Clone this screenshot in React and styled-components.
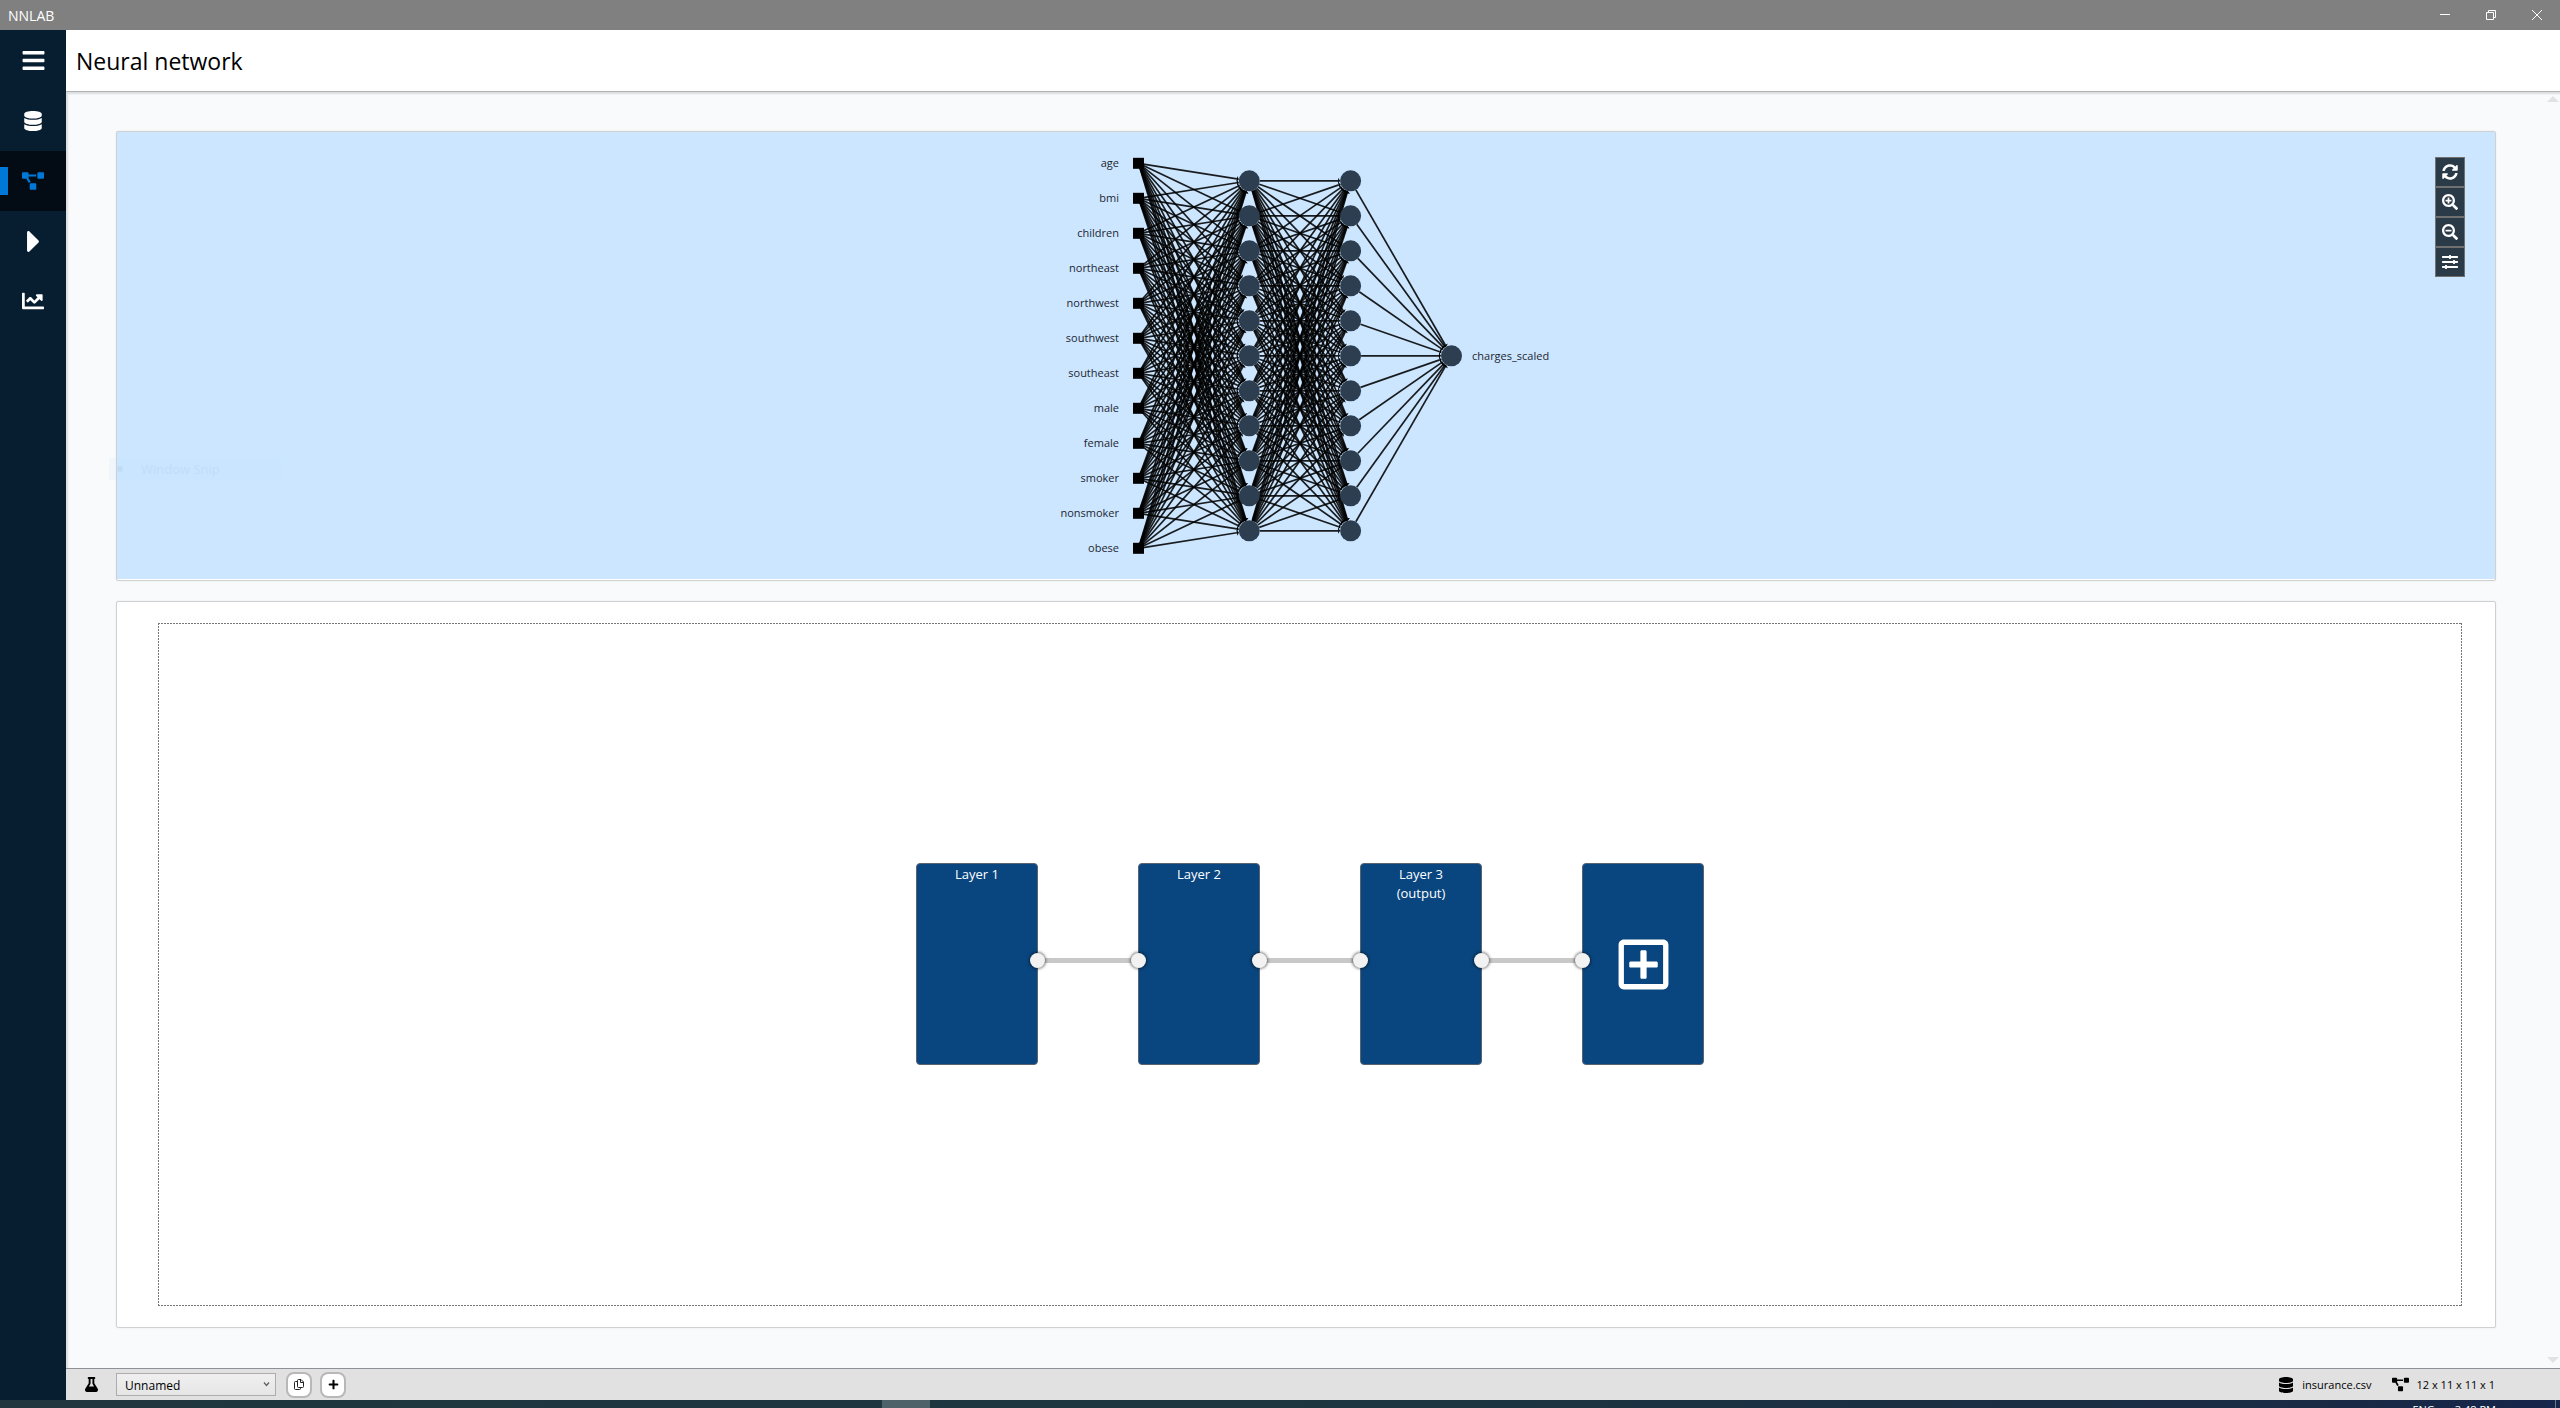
import React from "react";
import styled, { createGlobalStyle } from "styled-components";
import {
  FaBars,
  FaChartLine,
  FaDatabase,
  FaFlask,
  FaPlus,
  FaProjectDiagram,
  FaRegPlusSquare,
  FaSearchMinus,
  FaSearchPlus,
  FaSlidersH,
  FaSyncAlt,
} from "react-icons/fa";

const GlobalStyle = createGlobalStyle`
  * { box-sizing: border-box; }
  body {
    margin: 0;
    font-family: "Open Sans", "Noto Sans", "Liberation Sans", sans-serif;
    font-size: 13px;
    color: #000;
  }
  button { font: inherit; padding: 0; border: 0; background: none; color: inherit; }
`;

const Page = styled.div`
  display: flex;
  flex-direction: column;
  height: 100vh;
  overflow: hidden;
`;

const TitleBar = styled.header`
  display: flex;
  align-items: center;
  justify-content: space-between;
  height: 30px;
  padding-left: 8px;
  background: #808080;
  color: #fff;
  font-size: 14px;
`;

const WindowButtons = styled.div`
  display: flex;
`;

const WindowButton = styled.button`
  display: grid;
  place-items: center;
  width: 46px;
  height: 30px;
`;

const Body = styled.div`
  flex: 1;
  display: flex;
  min-height: 0;
`;

const Sidebar = styled.nav`
  display: flex;
  flex-direction: column;
  flex: none;
  width: 66px;
  background: #071d30;
  color: #fff;
`;

const SideButton = styled.button`
  display: flex;
  align-items: center;
  justify-content: center;
  height: 60px;
  color: ${(p) => (p.$active ? "#0078d7" : "#fff")};
  background: ${(p) =>
    p.$active
      ? "linear-gradient(#0078d7, #0078d7) 0 center / 8px 28px no-repeat, #030c14"
      : "transparent"};
  &:first-child { height: 61px; }
`;

const Main = styled.main`
  flex: 1;
  display: flex;
  flex-direction: column;
  min-width: 0;
`;

const Heading = styled.div`
  display: flex;
  align-items: center;
  height: 62px;
  padding-left: 10px;
  background: #fff;
  border-bottom: 1px solid #b1b4b7;
  h1 { margin: 0; font-size: 23px; line-height: 32px; font-weight: 400; }
`;

const Content = styled.div`
  position: relative;
  flex: 1;
  display: flex;
  flex-direction: column;
  gap: 20px;
  padding: 39px 64px 40px 50px;
  background: #f8fafc;
  box-shadow: inset 2px 2px 2px rgba(0, 0, 0, 0.12);
`;

const ScrollArrow = styled.span`
  position: absolute;
  right: 1px;
  ${(p) => (p.$down ? "bottom: 5px" : "top: 4px")};
  border: 6px solid transparent;
  border-width: ${(p) => (p.$down ? "6px 6px 0" : "0 6px 6px")};
  border-${(p) => (p.$down ? "top" : "bottom")}-color: #e1e2e3;
`;

const Panel = styled.section`
  position: relative;
  display: flex;
  background: #fff;
  border: 1px solid #cfd0d1;
  border-radius: 2px;
  box-shadow: 0 0 2px rgba(0, 0, 0, 0.08);
`;

const GraphPanel = styled(Panel)`
  height: 450px;
  padding-bottom: 1px;
`;

const GraphCanvas = styled.div`
  flex: 1;
  display: flex;
  justify-content: center;
  background: #cce6ff;
`;

const GraphTools = styled.div`
  position: absolute;
  top: 25px;
  right: 30px;
  width: 30px;
  display: flex;
  flex-direction: column;
`;

const GraphTool = styled.button`
  display: grid;
  place-items: center;
  height: 30px;
  border: 1px solid #707070;
  background: #2b3a47;
  color: #fff;
  font-size: 16px;
`;

const SnipHint = styled.div`
  position: absolute;
  left: -8px;
  top: 326px;
  display: flex;
  align-items: center;
  width: 172px;
  height: 22px;
  background: rgba(190, 225, 255, 0.12);
  color: #c1ddf6;
  &::before {
    content: "";
    width: 6px;
    height: 6px;
    margin: 0 18px 0 8px;
    border-radius: 50%;
    background: #c0dcf5;
  }
`;

const LayerPanel = styled(Panel)`
  flex: 1;
  padding: 21px 33px 21px 41px;
`;

const DASH = "#777 0 2px, transparent 2px 3px";

const LayerCanvas = styled.div`
  flex: 1;
  display: flex;
  align-items: center;
  justify-content: center;
  padding: 1px 1px 2px;
  background:
    repeating-linear-gradient(90deg, ${DASH}) top / 100% 1px no-repeat,
    repeating-linear-gradient(90deg, ${DASH}) bottom / 100% 1px no-repeat,
    repeating-linear-gradient(${DASH}) left / 1px 100% no-repeat,
    repeating-linear-gradient(${DASH}) right / 1px 100% no-repeat;
`;

const LayerCard = styled.button`
  display: flex;
  flex-direction: column;
  align-items: center;
  justify-content: ${(p) => (p.$centered ? "center" : "flex-start")};
  width: 122px;
  height: 202px;
  padding-top: ${(p) => (p.$centered ? 0 : 1)}px;
  border: 1px solid #5a6470;
  border-radius: 4px;
  background: #09467f;
  color: #fff;
  font-size: 13px;
  line-height: 19px;
`;

const Link = styled.div`
  position: relative;
  width: 100px;
  height: 5px;
  margin-bottom: 7px;
  background: #c8c8c8;
  &::before, &::after {
    content: "";
    position: absolute;
    top: -5px;
    width: 15px;
    height: 15px;
    border-radius: 50%;
    background: #f2f2f2;
    box-shadow: 0 0 3px 1px rgba(0, 0, 0, 0.5);
  }
  &::before { left: -8px; }
  &::after { right: -8px; }
`;

const StatusBar = styled.footer`
  display: flex;
  align-items: center;
  height: 32px;
  padding: 0 65px 0 18px;
  background: #e1e1e1;
  border-top: 1px solid #8d9196;
  font-size: 12px;
`;

const FlaskLabel = styled.label`
  display: grid;
  place-items: center;
  width: 14px;
  margin-right: 18px;
  font-size: 15px;
`;

const SelectBox = styled.div`
  display: grid;
  align-items: center;
  width: 160px;
  margin-right: 10px;
  svg { grid-area: 1 / 1; justify-self: end; margin-right: 6px; pointer-events: none; }
`;

const Select = styled.select`
  grid-area: 1 / 1;
  appearance: none;
  height: 23px;
  padding: 1px 8px 0;
  border: 1px solid #acacac;
  border-radius: 0;
  background: linear-gradient(#f0f0f0, #e5e5e5);
  color: #000;
  font: inherit;
`;

const RoundButton = styled.button`
  display: grid;
  place-items: center;
  width: 26px;
  height: 26px;
  margin-right: 8px;
  border: 2px solid #b8b8b8;
  border-radius: 8px;
  background: #fff;
`;

const StatusInfo = styled.div`
  display: flex;
  align-items: center;
  gap: 8px;
  font-size: 11px;
  margin-left: ${(p) => (p.$first ? "auto" : "20px")};
`;

const Taskbar = styled.div`
  display: flex;
  justify-content: flex-end;
  height: 8px;
  overflow: hidden;
  padding-right: 4px;
  background:
    linear-gradient(#4d6269, #4d6269) 882px 0 / 48px 8px no-repeat,
    linear-gradient(90deg, #21363f 0%, #1d3640 50%, #1a2a44 90%, #16254a 100%);
  color: #fff;
  font-size: 11px;
  line-height: 19px;
  gap: 20px;
`;

const Clock = styled.span`
  padding-right: 59px;
  border-right: 1px solid #6d7787;
`;

const INPUTS = [
  "age", "bmi", "children", "northeast", "northwest", "southwest",
  "southeast", "male", "female", "smoker", "nonsmoker", "obese",
];

const STEP = 35;
const column = (x, y, count) =>
  Array.from({ length: count }, (_, i) => ({ x, y: y + i * STEP }));

const inputNodes = column(80.5, 31.3, 12);
const hiddenA = column(191.3, 48.8, 11);
const hiddenB = column(292.6, 48.8, 11);
const outputNodes = column(393.5, 223.8, 1);
const RADIUS = 10.5;

function Edge({ from, to, square }) {
  const dx = to.x - from.x;
  const dy = to.y - from.y;
  const len = Math.hypot(dx, dy);
  const ux = dx / len;
  const uy = dy / len;
  const start = square ? 0 : RADIUS;
  const tipX = to.x - ux * RADIUS;
  const tipY = to.y - uy * RADIUS;
  const baseX = tipX - ux * 2;
  const baseY = tipY - uy * 2;
  return (
    <>
      <line
        x1={from.x + ux * start}
        y1={from.y + uy * start}
        x2={baseX}
        y2={baseY}
        stroke="#000"
        strokeOpacity="0.88"
        strokeWidth="1.7"
      />
      <polygon
        points={`${tipX},${tipY} ${baseX - uy * 3},${baseY + ux * 3} ${baseX + uy * 3},${baseY - ux * 3}`}
      />
    </>
  );
}

function Edges({ from, to, square }) {
  return from.flatMap((a, i) =>
    to.map((b, j) => <Edge key={`${i}-${j}`} from={a} to={b} square={square} />)
  );
}

function NetworkGraph() {
  return (
    <svg width="496" height="448" viewBox="0 0 496 448" fontSize="11" fill="#000">
      <Edges from={inputNodes} to={hiddenA} square />
      <Edges from={hiddenA} to={hiddenB} />
      <Edges from={hiddenB} to={outputNodes} />
      {inputNodes.map((n, i) => (
        <g key={INPUTS[i]}>
          <rect x={n.x - 5.5} y={n.y - 5.5} width="11" height="11" />
          <text x="61" y={n.y + 4} textAnchor="end" fill="#1c2732">{INPUTS[i]}</text>
        </g>
      ))}
      {[...hiddenA, ...hiddenB, ...outputNodes].map((n, i) => (
        <circle key={i} cx={n.x} cy={n.y} r={RADIUS} fill="#2d3e50" />
      ))}
      <text x="414" y={outputNodes[0].y + 4} fill="#1c2732">charges_scaled</text>
    </svg>
  );
}

const PlayIcon = () => (
  <svg width="12" height="21" viewBox="0 107 169 298" fill="currentColor">
    <path d="M0 384.662V127.338c0-17.818 21.543-26.741 34.142-14.142l128.662 128.662c7.81 7.81 7.81 20.474 0 28.284L34.142 398.804C21.543 411.404 0 402.48 0 384.662z" />
  </svg>
);

const CopyIcon = () => (
  <svg width="10" height="11" viewBox="0 0 10 11" fill="none" stroke="#222">
    <path d="M3.5 1.5a1 1 0 0 1 1-1H7L9.500 3v4.500a1 1 0 0 1-1 1h-4a1 1 0 0 1-1-1zM6.500.5v3h3M3 2.500H1.500a1 1 0 0 0-1 1v6a1 1 0 0 0 1 1h4a1 1 0 0 0 1-1V9" />
  </svg>
);

const MENU = [
  { label: "Menu", icon: <FaBars size={25} /> },
  { label: "Data", icon: <FaDatabase size={20} /> },
  { label: "Neural network", icon: <FaProjectDiagram size={22} />, active: true },
  { label: "Training", icon: <PlayIcon /> },
  { label: "Results", icon: <FaChartLine size={22} /> },
];

const TOOLS = [
  { label: "Refresh", icon: <FaSyncAlt /> },
  { label: "Zoom in", icon: <FaSearchPlus /> },
  { label: "Zoom out", icon: <FaSearchMinus /> },
  { label: "Settings", icon: <FaSlidersH /> },
];

const LAYERS = [["Layer 1"], ["Layer 2"], ["Layer 3", "(output)"]];

export default function App() {
  return (
    <Page>
      <GlobalStyle />
      <TitleBar>
        <span>NNLAB</span>
        <WindowButtons>
          <WindowButton aria-label="Minimize">
            <svg width="10" height="10" stroke="#fff"><path d="M0 4.500h10" /></svg>
          </WindowButton>
          <WindowButton aria-label="Restore">
            <svg width="10" height="10" fill="none" stroke="#fff">
              <path d="M.5 2.500h7v7h-7zM2.500 2.500v-2h7v7h-2" />
            </svg>
          </WindowButton>
          <WindowButton aria-label="Close">
            <svg width="10" height="10" stroke="#fff"><path d="M0 0l10 10M10 0L0 10" /></svg>
          </WindowButton>
        </WindowButtons>
      </TitleBar>
      <Body>
        <Sidebar>
          {MENU.map((m) => (
            <SideButton key={m.label} aria-label={m.label} $active={m.active}>
              {m.icon}
            </SideButton>
          ))}
        </Sidebar>
        <Main>
          <Heading><h1>Neural network</h1></Heading>
          <Content>
            <ScrollArrow />
            <ScrollArrow $down />
            <GraphPanel>
              <GraphCanvas><NetworkGraph /></GraphCanvas>
              <SnipHint>Window Snip</SnipHint>
              <GraphTools>
                {TOOLS.map((t) => (
                  <GraphTool key={t.label} aria-label={t.label}>{t.icon}</GraphTool>
                ))}
              </GraphTools>
            </GraphPanel>
            <LayerPanel>
              <LayerCanvas>
                {LAYERS.map((lines) => (
                  <React.Fragment key={lines[0]}>
                    <LayerCard>
                      {lines.map((l) => <span key={l}>{l}</span>)}
                    </LayerCard>
                    <Link />
                  </React.Fragment>
                ))}
                <LayerCard $centered aria-label="Add layer">
                  <FaRegPlusSquare size={57} />
                </LayerCard>
              </LayerCanvas>
            </LayerPanel>
          </Content>
          <StatusBar>
            <FlaskLabel htmlFor="experiment" aria-label="Experiment"><FaFlask /></FlaskLabel>
            <SelectBox>
              <Select id="experiment"><option>Unnamed</option></Select>
              <svg width="7" height="5" fill="none" stroke="#606060" strokeWidth="1.3">
                <path d="M1 .5l2.500 3L6 .5" />
              </svg>
            </SelectBox>
            <RoundButton aria-label="Duplicate"><CopyIcon /></RoundButton>
            <RoundButton aria-label="Add"><FaPlus size={11} /></RoundButton>
            <StatusInfo $first><FaDatabase size={16} />insurance.csv</StatusInfo>
            <StatusInfo><FaProjectDiagram size={17} />12 x 11 x 11 x 1</StatusInfo>
          </StatusBar>
        </Main>
      </Body>
      <Taskbar>
        <span>ENG</span>
        <Clock>3:48 PM</Clock>
      </Taskbar>
    </Page>
  );
}
